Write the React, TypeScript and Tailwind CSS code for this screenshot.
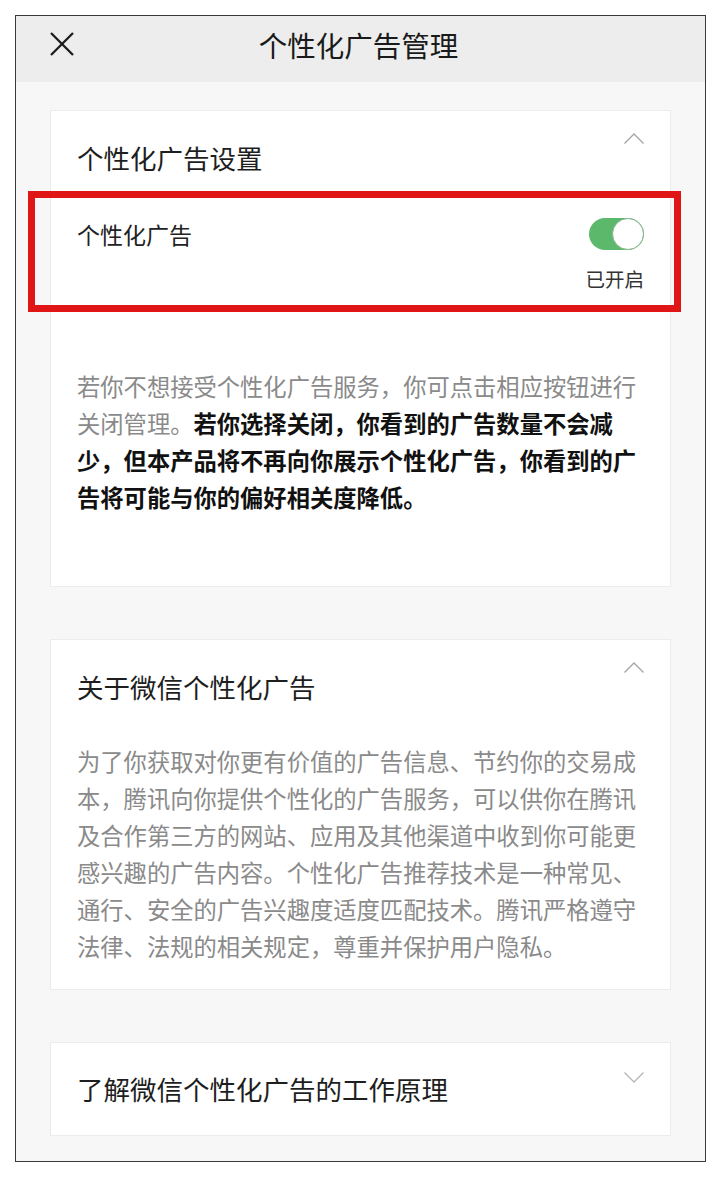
import React from "react";

function ChevronUp() {
  return (
    <svg width="20" height="11" viewBox="0 0 20 11" className="shrink-0">
      <polyline points="0.5,10.5 10,1 19.5,10.5" fill="none" stroke="#a3a3a3" strokeWidth="1.3" />
    </svg>
  );
}

function ChevronDown() {
  return (
    <svg width="20" height="11" viewBox="0 0 20 11" className="shrink-0">
      <polyline points="0.5,0.5 10,10 19.5,0.5" fill="none" stroke="#b5b5b5" strokeWidth="1.3" />
    </svg>
  );
}

function CloseIcon() {
  return (
    <svg width="24" height="24" viewBox="0 0 24 24" className="shrink-0">
      <line x1="1" y1="1" x2="23" y2="23" stroke="#1c1c1c" strokeWidth="2.3" />
      <line x1="23" y1="1" x2="1" y2="23" stroke="#1c1c1c" strokeWidth="2.3" />
    </svg>
  );
}

function CardHeader({ title }: { title: string }) {
  return (
    <div className="flex items-start justify-between pt-[22px]">
      <div className="mt-[8px] h-[34px] text-[26.5px] leading-[34px] text-[#1e1e1e]">{title}</div>
      <ChevronUp />
    </div>
  );
}

export default function App() {
  return (
    <div className="min-h-[1177px] bg-white pt-[15px] px-[15px] font-['Noto_Sans_CJK_SC',sans-serif]">
      <div className="w-[691px] border border-[#3a3a3a] bg-[#f7f7f7]">
        {/* Header */}
        <div className="relative flex h-[66px] items-start bg-[#ededed] pt-[13px]">
          <div className="ml-[34px] mt-[3px]">
            <CloseIcon />
          </div>
          <div className="absolute left-0 right-0 top-[13px] pr-[4px] text-center text-[28.5px] leading-[32px] text-[#1a1a1a]">
            个性化广告管理
          </div>
        </div>

        <div className="flex flex-col gap-[52px] px-[34px] pt-[28px] pb-[25px]">
          {/* Card 1 */}
          <div className="border border-[#ececec] bg-white px-[26px] pb-[70px]">
            <CardHeader title="个性化广告设置" />
            <div className="relative mt-[43px] flex items-start justify-between">
              <div className="text-[23px] leading-[32px] text-[#222]">个性化广告</div>
              <div className="flex flex-col items-end">
                <div className="relative h-[32px] w-[55px] rounded-full bg-[#5cb96c]">
                  <div className="absolute right-0 top-0 h-[32px] w-[32px] rounded-full border border-[#86b58f] bg-white" />
                </div>
                <div className="mt-[16px] text-[19.5px] leading-[26px] text-[#333]">已开启</div>
              </div>
              <div className="pointer-events-none absolute left-[-49px] right-[-37px] top-[-27px] bottom-[-20px] border-[7px] border-[#e01515]" />
            </div>
            <p className="mt-[76px] text-[23.3px] leading-[37px] text-[#8a8a8a]">
              若你不想接受个性化广告服务，你可点击相应按钮进行关闭管理。<b className="font-bold text-[#111]">若你选择关闭，你看到的广告数量不会减少，但本产品将不再向你展示个性化广告，你看到的广告将可能与你的偏好相关度降低。</b>
            </p>
          </div>

          {/* Card 2 */}
          <div className="border border-[#ececec] bg-white px-[26px] pb-[24px]">
            <CardHeader title="关于微信个性化广告" />
            <p className="mt-[39px] text-[23.3px] leading-[37px] text-[#8a8a8a]">
              为了你获取对你更有价值的广告信息、节约你的交易成本，腾讯向你提供个性化的广告服务，可以供你在腾讯及合作第三方的网站、应用及其他渠道中收到你可能更感兴趣的广告内容。个性化广告推荐技术是一种常见、通行、安全的广告兴趣度适度匹配技术。腾讯严格遵守法律、法规的相关规定，尊重并保护用户隐私。
            </p>
          </div>

          {/* Card 3 */}
          <div className="flex items-start justify-between border border-[#ececec] bg-white px-[26px] py-[29px]">
            <div className="h-[34px] text-[26.5px] leading-[34px] text-[#1e1e1e]">了解微信个性化广告的工作原理</div>
            <ChevronDown />
          </div>
        </div>
      </div>
    </div>
  );
}
